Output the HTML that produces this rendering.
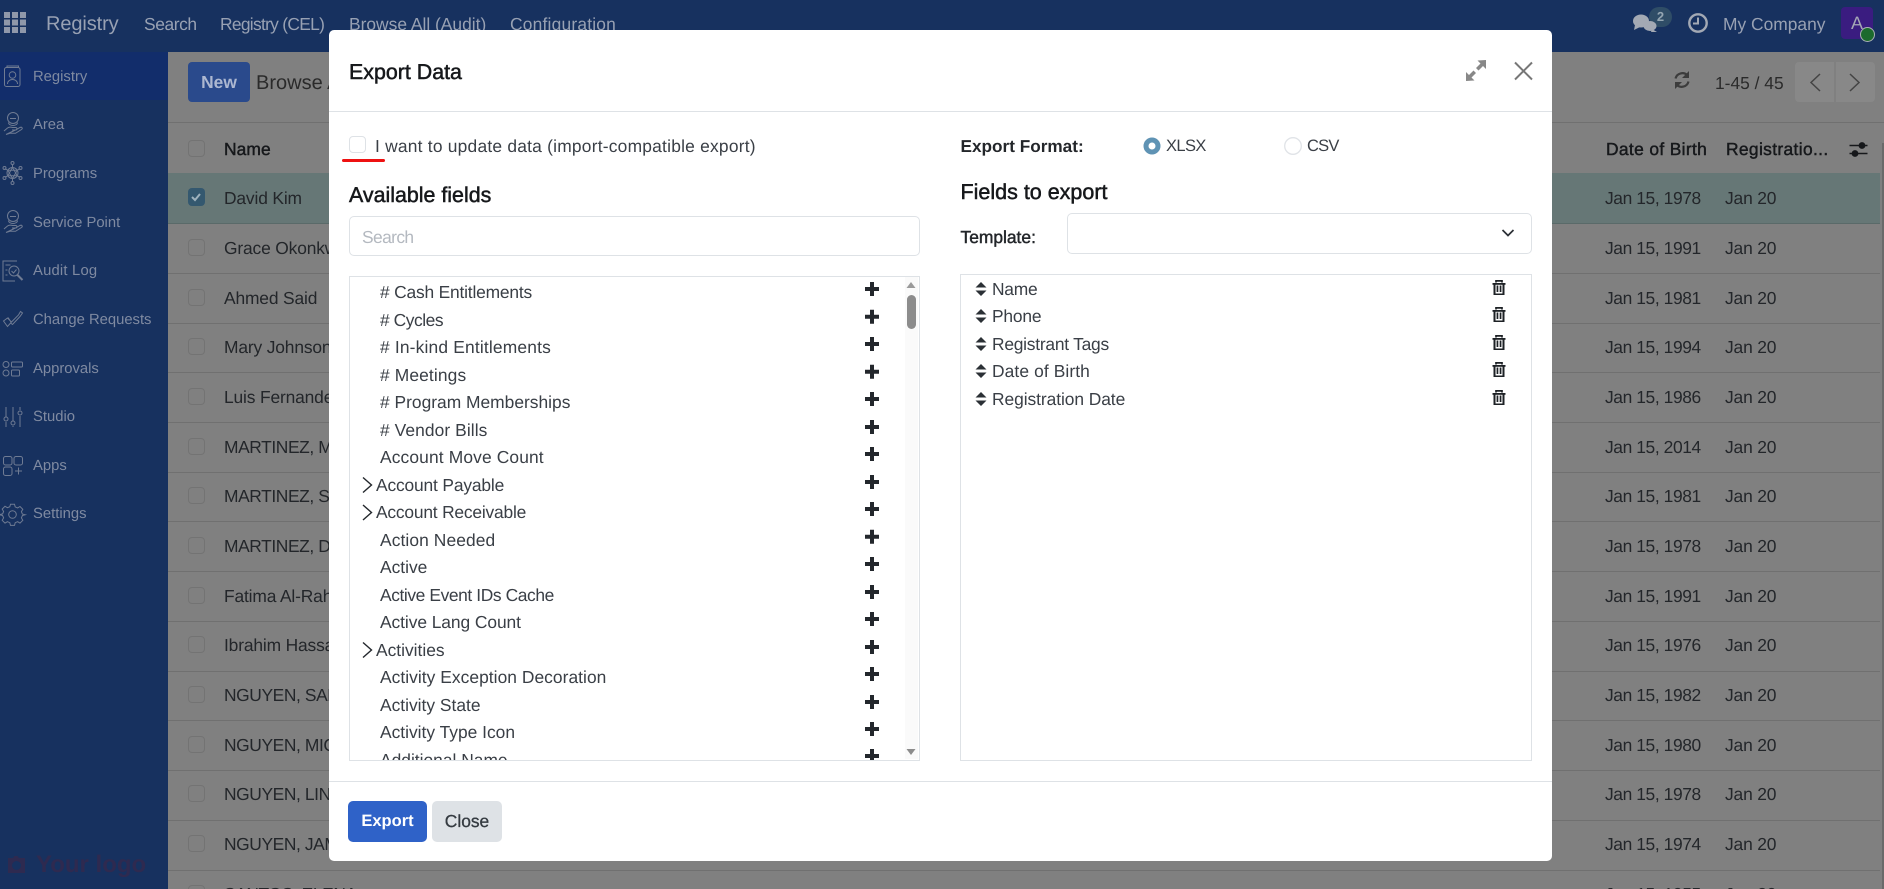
<!DOCTYPE html>
<html lang="en"><head><meta charset="utf-8"><title>Export Data</title>
<style>
html,body{margin:0;padding:0;width:1884px;height:889px;overflow:hidden;background:#808080}
body{position:relative;font-family:"Liberation Sans",Arial,sans-serif;font-size:17.4px;color:#23262a;text-rendering:geometricPrecision}
.b{position:absolute}
.t{position:absolute;white-space:nowrap;line-height:24px;height:24px}
.n{color:#98a1b3}
.s{color:#7f8aa1;font-size:14.8px}
.h{color:#16181b;-webkit-text-stroke:.5px #16181b}
.m{color:#3a3f46}
.d{color:#16181b;-webkit-text-stroke:.45px #16181b}
.j{letter-spacing:-.4px}
.k{letter-spacing:-.15px}
.u{letter-spacing:-.4px}
.cb{position:absolute;left:188px;width:15px;height:15px;border:1.5px solid #737373;border-radius:4px}
.ln{position:absolute;left:168px;width:1712px;height:1px;background:#707070}
svg{position:absolute;left:0;top:0}
.clip{position:absolute;left:0;top:0;width:1884px;height:889px;clip-path:inset(277px 0 129px 0)}
</style></head><body>

<!-- app shell -->
<div class="b" style="left:0;top:0;width:1884px;height:52px;background:#17315f"></div>
<div class="b" style="left:0;top:52px;width:168px;height:837px;background:#17315f"></div>
<div class="b" style="left:0;top:52px;width:168px;height:48px;background:#122d6b"></div>

<div class="t n" style="left:46px;top:12px;font-size:20px;letter-spacing:-.1px">Registry</div>
<div class="t n" style="left:144px;top:12px;letter-spacing:-.4px">Search</div>
<div class="t n" style="left:220px;top:12px;letter-spacing:-.7px">Registry (CEL)</div>
<div class="t n" style="left:349px;top:12px">Browse All (Audit)</div>
<div class="t n" style="left:510px;top:12px;letter-spacing:.2px">Configuration</div>
<div class="t n" style="left:1723px;top:12px">My Company</div>

<div class="b" style="left:1649px;top:7px;width:23px;height:20px;border-radius:10px;background:#2f4d67;color:#93a5b1;font-size:13px;font-weight:bold;text-align:center;line-height:20px">2</div>
<div class="b" style="left:1841px;top:7px;width:32px;height:32px;border-radius:4px;background:#3a1c80;color:#a5a7b5;font-size:18px;line-height:32px;text-align:center">A</div>
<div class="b" style="left:1860px;top:27px;width:13px;height:13px;border-radius:50%;background:#1c6a2d;border:1.5px solid #a9b0b5"></div>

<div class="t s" style="left:33px;top:65px">Registry</div>
<div class="t s" style="left:33px;top:113px">Area</div>
<div class="t s" style="left:33px;top:162px">Programs</div>
<div class="t s" style="left:33px;top:211px">Service Point</div>
<div class="t s" style="left:33px;top:259px;letter-spacing:.2px">Audit Log</div>
<div class="t s" style="left:33px;top:308px">Change Requests</div>
<div class="t s" style="left:33px;top:357px">Approvals</div>
<div class="t s" style="left:33px;top:405px">Studio</div>
<div class="t s" style="left:33px;top:454px">Apps</div>
<div class="t s" style="left:33px;top:502px">Settings</div>
<div class="t" style="left:36px;top:853px;font-size:24px;font-weight:bold;color:#2e2a50">Your logo</div>

<!-- control panel -->
<div class="b" style="left:188px;top:62px;width:62px;height:40px;border-radius:4px;background:#2a4a8c;color:#adb8d1;font-weight:bold;text-align:center;line-height:40px;font-size:17.4px">New</div>
<div class="t" style="left:256px;top:71px;font-size:20px;color:#2a2a2a">Browse All</div>
<div class="t" style="left:1715px;top:71px;color:#2a2a2a">1-45 / 45</div>
<div class="b" style="left:1795px;top:62px;width:39px;height:40px;border-radius:4px 0 0 4px;background:#888"></div>
<div class="b" style="left:1836px;top:62px;width:39px;height:40px;border-radius:0 4px 4px 0;background:#888"></div>

<!-- table -->
<div class="b" style="left:168px;top:122px;width:1716px;height:1px;background:#707070"></div>
<div class="b" style="left:168px;top:173px;width:1712px;height:50px;background:#667776"></div>
<div class="b" style="left:1882px;top:143px;width:2px;height:746px;background:#6a6a6a"></div>
<div class="ln" style="top:223px;background:#5a6a69"></div><div class="ln" style="top:273px"></div><div class="ln" style="top:323px"></div><div class="ln" style="top:372px"></div><div class="ln" style="top:422px"></div><div class="ln" style="top:472px"></div><div class="ln" style="top:521px"></div><div class="ln" style="top:571px"></div><div class="ln" style="top:621px"></div><div class="ln" style="top:671px"></div><div class="ln" style="top:720px"></div><div class="ln" style="top:770px"></div><div class="ln" style="top:820px"></div><div class="ln" style="top:870px"></div>

<div class="cb" style="top:140px"></div>
<div class="t d" style="left:224px;top:137px;letter-spacing:.1px">Name</div>
<div class="t d" style="left:1606px;top:137px;letter-spacing:.35px">Date of Birth</div>
<div class="t d" style="left:1726px;top:137px;letter-spacing:.35px">Registratio...</div>

<div class="b" style="left:188px;top:188px;width:17px;height:18px;border-radius:4px;background:#34586f"></div>
<div class="cb" style="top:239px"></div><div class="cb" style="top:289px"></div><div class="cb" style="top:338px"></div><div class="cb" style="top:388px"></div><div class="cb" style="top:438px"></div><div class="cb" style="top:487px"></div><div class="cb" style="top:537px"></div><div class="cb" style="top:587px"></div><div class="cb" style="top:636px"></div><div class="cb" style="top:686px"></div><div class="cb" style="top:736px"></div><div class="cb" style="top:785px"></div><div class="cb" style="top:835px"></div><div class="cb" style="top:885px"></div>

<div class="t k" style="left:224px;top:186px">David Kim</div>
<div class="t k" style="left:224px;top:236px">Grace Okonkwo</div>
<div class="t k" style="left:224px;top:286px">Ahmed Said</div>
<div class="t k" style="left:224px;top:335px">Mary Johnson</div>
<div class="t k" style="left:224px;top:385px">Luis Fernandez</div>
<div class="t u" style="left:224px;top:435px">MARTINEZ, MARIA</div>
<div class="t u" style="left:224px;top:484px">MARTINEZ, SOFIA</div>
<div class="t u" style="left:224px;top:534px">MARTINEZ, DANIEL</div>
<div class="t k" style="left:224px;top:584px">Fatima Al-Rahman</div>
<div class="t k" style="left:224px;top:633px">Ibrahim Hassan</div>
<div class="t u" style="left:224px;top:683px">NGUYEN, SARAH</div>
<div class="t u" style="left:224px;top:733px">NGUYEN, MICHAEL</div>
<div class="t u" style="left:224px;top:782px">NGUYEN, LINH</div>
<div class="t u" style="left:224px;top:832px">NGUYEN, JAMES</div>
<div class="t u" style="left:224px;top:882px">SANTOS, ELENA</div>

<div class="t j" style="left:1605px;top:186px">Jan 15, 1978</div><div class="t k" style="left:1725px;top:186px">Jan 20</div>
<div class="t j" style="left:1605px;top:236px">Jan 15, 1991</div><div class="t k" style="left:1725px;top:236px">Jan 20</div>
<div class="t j" style="left:1605px;top:286px">Jan 15, 1981</div><div class="t k" style="left:1725px;top:286px">Jan 20</div>
<div class="t j" style="left:1605px;top:335px">Jan 15, 1994</div><div class="t k" style="left:1725px;top:335px">Jan 20</div>
<div class="t j" style="left:1605px;top:385px">Jan 15, 1986</div><div class="t k" style="left:1725px;top:385px">Jan 20</div>
<div class="t j" style="left:1605px;top:435px">Jan 15, 2014</div><div class="t k" style="left:1725px;top:435px">Jan 20</div>
<div class="t j" style="left:1605px;top:484px">Jan 15, 1981</div><div class="t k" style="left:1725px;top:484px">Jan 20</div>
<div class="t j" style="left:1605px;top:534px">Jan 15, 1978</div><div class="t k" style="left:1725px;top:534px">Jan 20</div>
<div class="t j" style="left:1605px;top:584px">Jan 15, 1991</div><div class="t k" style="left:1725px;top:584px">Jan 20</div>
<div class="t j" style="left:1605px;top:633px">Jan 15, 1976</div><div class="t k" style="left:1725px;top:633px">Jan 20</div>
<div class="t j" style="left:1605px;top:683px">Jan 15, 1982</div><div class="t k" style="left:1725px;top:683px">Jan 20</div>
<div class="t j" style="left:1605px;top:733px">Jan 15, 1980</div><div class="t k" style="left:1725px;top:733px">Jan 20</div>
<div class="t j" style="left:1605px;top:782px">Jan 15, 1978</div><div class="t k" style="left:1725px;top:782px">Jan 20</div>
<div class="t j" style="left:1605px;top:832px">Jan 15, 1974</div><div class="t k" style="left:1725px;top:832px">Jan 20</div>
<div class="t j" style="left:1605px;top:882px">Jan 15, 1955</div><div class="t k" style="left:1725px;top:882px">Jan 20</div>

<!-- background icons -->
<svg width="1884" height="889" viewBox="0 0 1884 889">
 <g fill="#8f98aa">
  <path d="M4 12h6v6H4zM12 12h6v6h-6zM20 12h6v6h-6zM4 19.500h6v6H4zM12 19.500h6v6h-6zM20 19.500h6v6h-6zM4 27h6v6H4zM12 27h6v6h-6zM20 27h6v6h-6z"/>
 </g>
 <g fill="#a3a9b4">
  <ellipse cx="1641" cy="21" rx="8" ry="6.500"/><path d="M1635 25l-1 5 6-3z"/>
  <ellipse cx="1650" cy="26" rx="6.500" ry="5"/><path d="M1652 29l5 3-6-0z"/>
 </g>
 <circle cx="1698" cy="23" r="8.700" fill="none" stroke="#a3a9b4" stroke-width="2.400"/>
 <path d="M1698 17.500v6h-5" fill="none" stroke="#a3a9b4" stroke-width="2"/>
 <!-- sidebar -->
 <g fill="none" stroke="#6f7b93" stroke-width="1">
  <path d="M7 67.500v-1.500h11.500v1.500"/><rect x="4.500" y="67.500" width="15.500" height="19" rx="2"/><circle cx="12.500" cy="75" r="3.300"/><path d="M7.500 84c0-6 10-6 10 0"/>
  <g id="hand"><circle cx="13" cy="118" r="5.500"/><path d="M10 118.500h6"/><path d="M8.500 122.500c0 2 2.500 3 4.500 3s4.500-1 4.500-3"/><path d="M4 131l3.500-3c2-1.500 3.500-1 5-.5h3c2 0 2 2.500 0 2.500h-3.500m3.500 0l4.500-2.500c2-1 3 1 1.500 2l-6 3.800h-5.500L6 134.500z"/></g>
  <use href="#hand" y="98"/>
  <circle cx="12.500" cy="173" r="5.500"/><path d="M12.500 167.500l4.800 8.300h-9.600zM12.500 178.500l-4.800-8.300h9.600z"/><path d="M12.500 167.500v-3M12.500 178.500v3M7.700 170.200l-3-1.500M17.300 175.800l3 1.500M7.700 175.800l-3 1.500M17.300 170.200l3-1.500"/><circle cx="12.500" cy="163" r="1.500"/><circle cx="12.500" cy="183" r="1.500"/><circle cx="4.500" cy="168" r="1.500"/><circle cx="20.500" cy="168" r="1.500"/><circle cx="4.500" cy="178" r="1.500"/><circle cx="20.500" cy="178" r="1.500"/>
  <path d="M17 261h-14v20h12"/><path d="M5.500 265h5M5.500 270h2M5.500 275h2"/><circle cx="14" cy="271" r="5"/><path d="M11.500 271l2 2 3-3.500"/><path d="M17.500 275l5 5" stroke-width="2"/>
  <path d="M3.500 321l4-3 4 4-4 4.500zM8 317.500L11 322M11.500 322l7-7 2-3.500 2 1.500-2.500 3.500-7.500 8-2-1.500"/>
  <circle cx="6" cy="364.500" r="3"/><circle cx="6" cy="373" r="3"/><rect x="11.500" y="362" width="11" height="5" rx="1"/><rect x="11.500" y="370" width="8" height="6" rx="1"/>
  <path d="M6 407v10M6 422v5M13 407v14M13 426v1M20 407v3M20 416v11"/><circle cx="6" cy="419" r="2"/><circle cx="13" cy="423" r="2"/><circle cx="20" cy="413" r="2"/>
  <rect x="3.500" y="456.500" width="8.500" height="8.500" rx="2"/><rect x="14" y="456.500" width="8.500" height="8.500" rx="2"/><rect x="3.500" y="467" width="8.500" height="8.500" rx="2"/><path d="M18.500 467.500v7M15 471h7"/>
  <circle cx="12.500" cy="514.500" r="3.800"/><path d="M10.500 504.500h4l.7 2.700 2.400 1 2.400-1.400 2.800 2.800-1.400 2.400 1 2.400 2.700.7v0l-2.700.7-1 2.400 1.400 2.400-2.800 2.800-2.400-1.400-2.400 1-.7 2.700h-4l-.7-2.700-2.400-1-2.400 1.400-2.800-2.800 1.400-2.400-1-2.400-2.700-.7v-.2l2.700-.7 1-2.400-1.400-2.400 2.800-2.800 2.400 1.400 2.400-1z" transform="translate(0 -.3)"/>
 </g>
 <path d="M8 858h5l1.500-2h3l1.500 2h6v15H8zM16.500 861a4.500 4.500 0 100 9 4.500 4.500 0 000-9z" fill="#2e2a50" fill-rule="evenodd"/>
 <!-- table icons -->
 <path d="M192 197l3 3 5-6" fill="none" stroke="#9fb2bd" stroke-width="2"/>
 <g fill="none" stroke="#3c3c3c" stroke-width="2.200"><path d="M1675.500 78.500a7 7 0 0112-3M1688.500 81.500a7 7 0 01-12 3"/></g>
 <path d="M1689 71v7h-7zM1675 89v-7h7z" fill="#3c3c3c"/>
 <g fill="none" stroke="#444" stroke-width="1.500"><path d="M1820 74l-9 8.500 9 8.500M1850 74l9 8.500-9 8.500"/></g>
 <g stroke="#16181b" stroke-width="1.600" fill="#16181b"><path d="M1849.500 145.500h18M1849.500 153.500h18"/><circle cx="1862" cy="145.500" r="2.600"/><circle cx="1855" cy="153.500" r="2.600"/></g>
</svg>

<!-- modal -->
<div class="b" style="left:329px;top:30px;width:1223px;height:831px;background:#fff;border-radius:5px"></div>
<div class="b" style="left:329px;top:111px;width:1223px;height:1px;background:#dee2e6"></div>
<div class="b" style="left:329px;top:781px;width:1223px;height:1px;background:#dee2e6"></div>

<div class="t h" style="left:349px;top:60px;font-size:21.4px">Export Data</div>

<div class="b" style="left:349px;top:136px;width:15px;height:15px;border:1.5px solid #dee2e6;border-radius:4px"></div>
<div class="b" style="left:342px;top:159px;width:43px;height:3px;background:#ee1111;border-radius:2px"></div>
<div class="t m" style="left:375px;top:134px;letter-spacing:.22px">I want to update data (import-compatible export)</div>

<div class="t h" style="left:349px;top:183px;font-size:21.4px">Available fields</div>
<div class="b" style="left:349px;top:216px;width:569px;height:38px;border:1.5px solid #dee2e6;border-radius:5px"></div>
<div class="t" style="left:362px;top:225px;color:#b4b9c0;letter-spacing:-.6px">Search</div>

<div class="b" style="left:349px;top:276px;width:569px;height:483px;border:1px solid #dee2e6"></div>
<div class="b" style="left:905px;top:277px;width:13px;height:482px;background:#fafafa"></div>
<div class="b" style="left:907px;top:295px;width:9px;height:34px;border-radius:5px;background:#8c8c8c"></div>

<div class="clip">
<div class="t m" style="left:380px;top:280px;letter-spacing:-.19px"># Cash Entitlements</div>
<div class="t m" style="left:380px;top:308px;letter-spacing:-.45px"># Cycles</div>
<div class="t m" style="left:380px;top:335px;letter-spacing:.17px"># In-kind Entitlements</div>
<div class="t m" style="left:380px;top:363px;letter-spacing:.12px"># Meetings</div>
<div class="t m" style="left:380px;top:390px"># Program Memberships</div>
<div class="t m" style="left:380px;top:418px;letter-spacing:.08px"># Vendor Bills</div>
<div class="t m" style="left:380px;top:445px;letter-spacing:.13px">Account Move Count</div>
<div class="t m" style="left:376px;top:473px;letter-spacing:-.16px">Account Payable</div>
<div class="t m" style="left:376px;top:500px;letter-spacing:-.2px">Account Receivable</div>
<div class="t m" style="left:380px;top:528px;letter-spacing:.09px">Action Needed</div>
<div class="t m" style="left:380px;top:555px">Active</div>
<div class="t m" style="left:380px;top:583px;letter-spacing:-.4px">Active Event IDs Cache</div>
<div class="t m" style="left:380px;top:610px;letter-spacing:-.07px">Active Lang Count</div>
<div class="t m" style="left:376px;top:638px">Activities</div>
<div class="t m" style="left:380px;top:665px;letter-spacing:.04px">Activity Exception Decoration</div>
<div class="t m" style="left:380px;top:693px">Activity State</div>
<div class="t m" style="left:380px;top:720px">Activity Type Icon</div>
<div class="t m" style="left:380px;top:748px">Additional Name</div>
<svg width="1884" height="889" viewBox="0 0 1884 889">
 <defs><path id="p" d="M-2-7h4v5h5v4H2v5h-4V2h-5v-4h5z" fill="#23272c"/></defs>
 <use href="#p" x="872" y="289"/><use href="#p" x="872" y="316.700"/><use href="#p" x="872" y="344"/><use href="#p" x="872" y="371.700"/><use href="#p" x="872" y="399"/><use href="#p" x="872" y="427"/><use href="#p" x="872" y="454"/><use href="#p" x="872" y="482"/><use href="#p" x="872" y="509"/><use href="#p" x="872" y="536.700"/><use href="#p" x="872" y="564"/><use href="#p" x="872" y="592"/><use href="#p" x="872" y="619"/><use href="#p" x="872" y="647"/><use href="#p" x="872" y="674"/><use href="#p" x="872" y="702"/><use href="#p" x="872" y="729"/><use href="#p" x="872" y="756"/>
 <g fill="none" stroke="#23272c" stroke-width="1.400"><path d="M363 477.500l8.500 7.500-8.500 7.500M363 505l8.500 7.500-8.500 7.500M363 642.500l8.500 7.500-8.500 7.500"/></g>
</svg>
</div>

<div class="t" style="left:960.500px;top:134px;font-size:17.200px;font-weight:bold;color:#23262a">Export Format:</div>
<div class="t m" style="left:1166px;top:134px;font-size:16.500px;letter-spacing:-.6px">XLSX</div>
<div class="t m" style="left:1307px;top:134px;font-size:16.500px;letter-spacing:-.8px">CSV</div>
<div class="t h" style="left:960.500px;top:180px;font-size:21.500px">Fields to export</div>
<div class="t" style="left:960.500px;top:225px;color:#23262a;-webkit-text-stroke:.45px #23262a">Template:</div>
<div class="b" style="left:1067px;top:213px;width:463px;height:39px;border:1.5px solid #dee2e6;border-radius:5px"></div>
<div class="b" style="left:960px;top:274px;width:570px;height:485px;border:1px solid #dee2e6"></div>
<div class="t m" style="left:992px;top:277px;letter-spacing:-.25px">Name</div>
<div class="t m" style="left:992px;top:304px;letter-spacing:-.2px">Phone</div>
<div class="t m" style="left:992px;top:332px;letter-spacing:-.24px">Registrant Tags</div>
<div class="t m" style="left:992px;top:359px;letter-spacing:.1px">Date of Birth</div>
<div class="t m" style="left:992px;top:387px;letter-spacing:-.07px">Registration Date</div>

<div class="b" style="left:348px;top:801px;width:79px;height:41px;border-radius:5px;background:#2f62c8;color:#fff;font-weight:bold;font-size:16.500px;text-align:center;line-height:41px">Export</div>
<div class="b" style="left:432px;top:801px;width:70px;height:41px;border-radius:5px;background:#dee2e6;color:#343a40;font-size:17.400px;-webkit-text-stroke:.3px #343a40;text-align:center;line-height:41px">Close</div>

<!-- modal icons -->
<svg width="1884" height="889" viewBox="0 0 1884 889">
 <defs>
  <path id="u" d="M0-7l5.500 5.500h-11zM0 7l5.500-5.500h-11z" fill="#2b3035"/>
  <g id="tr" fill="#1d2125"><path d="M-6.500-5h13v1.800h-13z"/><path d="M-3-5.500v-1.600h6v1.600" fill="none" stroke="#1d2125" stroke-width="1.700"/><path d="M-5.500-3.500h2v9h7v-9h2V7h-11z"/><path d="M-2.400-2.500h1.700v6.500h-1.700zM.7-2.500h1.700v6.500H.7z"/></g>
 </defs>
 <g fill="#888"><path d="M1486 60v9l-3-3-4.500 4.500-2.500-2.500 4.500-4.500-3-3zM1466 81v-9l3 3 4.500-4.500 2.500 2.500-4.500 4.500 3 3z"/></g>
 <path d="M1515 62.500l17 17M1532 62.500l-17 17" stroke="#777" stroke-width="2" fill="none"/>
 <circle cx="1152" cy="146" r="6" fill="#fff" stroke="#5f93b4" stroke-width="5"/>
 <circle cx="1293" cy="146" r="8.300" fill="#fff" stroke="#e0e3e7" stroke-width="1.300"/>
 <path d="M1502.500 230l5.500 5.500 5.500-5.500" fill="none" stroke="#2b3035" stroke-width="1.700"/>
 <use href="#u" x="981" y="289"/><use href="#u" x="981" y="316"/><use href="#u" x="981" y="344"/><use href="#u" x="981" y="371"/><use href="#u" x="981" y="399"/>
 <use href="#tr" x="1499" y="288"/><use href="#tr" x="1499" y="315"/><use href="#tr" x="1499" y="343"/><use href="#tr" x="1499" y="370"/><use href="#tr" x="1499" y="398"/>
 <path d="M911 282l4.500 6h-9z" fill="#9a9a9a"/><path d="M911 755l-4.500-6h9z" fill="#8c8c8c"/>
</svg>
</body></html>
